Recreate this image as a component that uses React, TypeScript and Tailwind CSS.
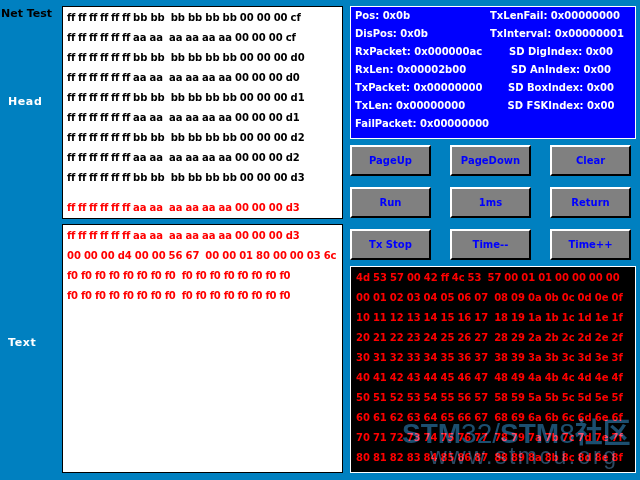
const head = [
  "ff ff ff ff ff ff bb bb  bb bb bb bb 00 00 00 cf",
  "ff ff ff ff ff ff aa aa  aa aa aa aa 00 00 00 cf",
  "ff ff ff ff ff ff bb bb  bb bb bb bb 00 00 00 d0",
  "ff ff ff ff ff ff aa aa  aa aa aa aa 00 00 00 d0",
  "ff ff ff ff ff ff bb bb  bb bb bb bb 00 00 00 d1",
  "ff ff ff ff ff ff aa aa  aa aa aa aa 00 00 00 d1",
  "ff ff ff ff ff ff bb bb  bb bb bb bb 00 00 00 d2",
  "ff ff ff ff ff ff aa aa  aa aa aa aa 00 00 00 d2",
  "ff ff ff ff ff ff bb bb  bb bb bb bb 00 00 00 d3",
];
const text = [
  "ff ff ff ff ff ff aa aa  aa aa aa aa 00 00 00 d3",
  "00 00 00 d4 00 00 56 67  00 00 01 80 00 00 03 6c",
  "f0 f0 f0 f0 f0 f0 f0 f0  f0 f0 f0 f0 f0 f0 f0 f0",
  "f0 f0 f0 f0 f0 f0 f0 f0  f0 f0 f0 f0 f0 f0 f0 f0",
];
const dump = [
  "4d 53 57 00 42 ff 4c 53  57 00 01 01 00 00 00 00",
  "00 01 02 03 04 05 06 07  08 09 0a 0b 0c 0d 0e 0f",
  "10 11 12 13 14 15 16 17  18 19 1a 1b 1c 1d 1e 1f",
  "20 21 22 23 24 25 26 27  28 29 2a 2b 2c 2d 2e 2f",
  "30 31 32 33 34 35 36 37  38 39 3a 3b 3c 3d 3e 3f",
  "40 41 42 43 44 45 46 47  48 49 4a 4b 4c 4d 4e 4f",
  "50 51 52 53 54 55 56 57  58 59 5a 5b 5c 5d 5e 5f",
  "60 61 62 63 64 65 66 67  68 69 6a 6b 6c 6d 6e 6f",
  "70 71 72 73 74 75 76 77  78 79 7a 7b 7c 7d 7e 7f",
  "80 81 82 83 84 85 86 87  88 89 8a 8b 8c 8d 8e 8f",
];
const left = [
  "Pos: 0x0b",
  "DisPos: 0x0b",
  "RxPacket: 0x000000ac",
  "RxLen: 0x00002b00",
  "TxPacket: 0x00000000",
  "TxLen: 0x00000000",
  "FailPacket: 0x00000000",
];
const right = [
  "SD DigIndex: 0x00",
  "SD AnIndex: 0x00",
  "SD BoxIndex: 0x00",
  "SD FSKIndex: 0x00",
];
const buttons = ["PageUp", "PageDown", "Clear", "Run", "1ms", "Return", "Tx Stop", "Time--", "Time++"];

function Hex({ line }: { line: string }) {
  const parts = line.split(/(f)/);
  return (
    <div className="h-[20px] whitespace-pre [word-spacing:-0.5px]">
      {parts.map((p, i) =>
        p === "f" ? (
          <span key={i} className="tracking-[-0.35px]">f</span>
        ) : (
          <span key={i}>{p}</span>
        ),
      )}
    </div>
  );
}

export default function App() {
  return (
    <div className="relative flex h-[480px] w-[640px] overflow-hidden bg-[#0080c0] font-['DejaVu_Sans',sans-serif] text-[10px] font-bold leading-[20px]">
      <div className="flex w-[62px] flex-col pt-[4px] text-[11px]">
        <div className="pl-[1px] text-black">Net Test</div>
        <div className="mt-[68px] pl-[8px] tracking-[0.6px] text-white">Head</div>
        <div className="mt-[221px] pl-[8px] tracking-[0.6px] text-white">Text</div>
      </div>

      <div className="flex w-[281px] flex-col gap-[5px] pt-[6px]">
        <div className="h-[213px] border border-black bg-white pl-[4px] pt-[1px] text-black">
          {head.map((l, i) => (
            <Hex key={i} line={l} />
          ))}
          <div className="mt-[10px] text-[#ff0000]">
            <Hex line="ff ff ff ff ff ff aa aa  aa aa aa aa 00 00 00 d3" />
          </div>
        </div>
        <div className="h-[249px] border border-black bg-white pl-[4px] pt-[1px] text-[#ff0000]">
          {text.map((l, i) => (
            <Hex key={i} line={l} />
          ))}
        </div>
      </div>

      <div className="ml-[7px] flex w-[286px] flex-col pt-[6px]">
        <div className="flex h-[133px] border border-white bg-[#0000ff] pl-[4px] text-white">
          <div className="w-[135px] leading-[18px]">
            {left.map((l) => (
              <div key={l} className="h-[18px] whitespace-pre">{l}</div>
            ))}
          </div>
          <div className="flex-1 leading-[18px]">
            <div className="h-[18px] whitespace-pre">TxLenFail: 0x00000000</div>
            <div className="h-[18px] whitespace-pre">TxInterval: 0x00000001</div>
            {right.map((l) => (
              <div key={l} className="h-[18px] w-[142px] whitespace-pre text-center">{l}</div>
            ))}
          </div>
        </div>

        <div className="mt-[6px] grid grid-cols-[81px_81px_81px] gap-x-[19px] gap-y-[11px]">
          {buttons.map((b) => (
            <div
              key={b}
              className="flex h-[31px] items-center justify-center border-2 border-b-black border-l-white border-r-black border-t-white bg-[#808080] text-[#0000ff]"
            >
              {b}
            </div>
          ))}
        </div>

        <div className="mt-[6px] h-[207px] border border-white bg-black pl-[5px] pt-[1px] text-[#ff0000]">
          {dump.map((l, i) => (
            <Hex key={i} line={l} />
          ))}
        </div>
      </div>

      <div className="absolute left-[402px] top-[417px] whitespace-pre font-['Liberation_Sans','Noto_Sans_CJK_SC',sans-serif] text-[28px] leading-[34px] text-[#1c4f70] mix-blend-lighten">
        <span className="font-bold">STM</span>
        <span className="font-normal">32/</span>
        <span className="font-bold">STM</span>
        <span className="font-normal">8</span>
        <span className="font-bold">社区</span>
      </div>
      <div className="absolute left-[430px] top-[443px] whitespace-pre font-['Liberation_Sans',sans-serif] text-[23px] font-normal leading-[26px] tracking-[2.5px] text-[#2b4a63] mix-blend-lighten">
        www.stmcu.org
      </div>
    </div>
  );
}
